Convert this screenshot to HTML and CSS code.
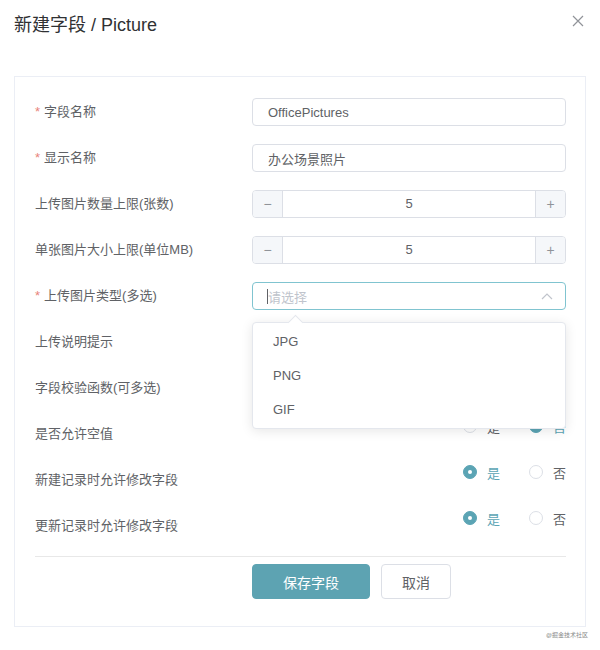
FILE: index.html
```html
<!DOCTYPE html>
<html lang="zh-CN">
<head>
  <meta charset="UTF-8">
  <title>新建字段 / Picture</title>
  <link rel="stylesheet" href="styles.css">
</head>
<body>

  <div class="dialog">
    <div class="dialog-header">
      <span class="dialog-title">新建字段 / Picture</span>
      <span class="close">
        <svg width="12" height="12" viewBox="0 0 12 12"><path d="M1 1L11 11M11 1L1 11" stroke="#909399" stroke-width="1.2" fill="none"/></svg>
      </span>
    </div>

    <div class="panel">
      <div class="form">
        <div class="form-row">
          <label class="form-label required">字段名称</label>
          <div class="form-control"><input class="text-input" value="OfficePictures"></div>
        </div>
        <div class="form-row">
          <label class="form-label required">显示名称</label>
          <div class="form-control"><input class="text-input" value="办公场景照片"></div>
        </div>
        <div class="form-row">
          <label class="form-label">上传图片数量上限(张数)</label>
          <div class="form-control">
            <div class="number-input">
              <span class="step minus">−</span>
              <span class="number-value">5</span>
              <span class="step plus">+</span>
            </div>
          </div>
        </div>
        <div class="form-row">
          <label class="form-label">单张图片大小上限(单位MB)</label>
          <div class="form-control">
            <div class="number-input">
              <span class="step minus">−</span>
              <span class="number-value">5</span>
              <span class="step plus">+</span>
            </div>
          </div>
        </div>
        <div class="form-row">
          <label class="form-label required">上传图片类型(多选)</label>
          <div class="form-control select-wrap">
            <div class="select is-focus">
              <span class="caret"></span><span class="placeholder">请选择</span>
              <svg class="arrow" width="12" height="7" viewBox="0 0 12 7"><path d="M1 6L6 1L11 6" stroke="#c0c4cc" stroke-width="1.2" fill="none"/></svg>
            </div>
            <div class="dropdown">
              <span class="dropdown-arrow"></span>
              <ul class="dropdown-list">
                <li>JPG</li>
                <li>PNG</li>
                <li>GIF</li>
              </ul>
            </div>
          </div>
        </div>
        <div class="form-row">
          <label class="form-label">上传说明提示</label>
          <div class="form-control"><input class="text-input" value=""></div>
        </div>
        <div class="form-row">
          <label class="form-label">字段校验函数(可多选)</label>
          <div class="form-control"><input class="text-input" value=""></div>
        </div>
        <div class="form-row">
          <label class="form-label">是否允许空值</label>
          <div class="form-control radio-group">
            <span class="radio"><span class="radio-dot"></span><span class="radio-text">是</span></span>
            <span class="radio checked"><span class="radio-dot"></span><span class="radio-text">否</span></span>
          </div>
        </div>
        <div class="form-row">
          <label class="form-label">新建记录时允许修改字段</label>
          <div class="form-control radio-group">
            <span class="radio checked"><span class="radio-dot"></span><span class="radio-text">是</span></span>
            <span class="radio"><span class="radio-dot"></span><span class="radio-text">否</span></span>
          </div>
        </div>
        <div class="form-row">
          <label class="form-label">更新记录时允许修改字段</label>
          <div class="form-control radio-group">
            <span class="radio checked"><span class="radio-dot"></span><span class="radio-text">是</span></span>
            <span class="radio"><span class="radio-dot"></span><span class="radio-text">否</span></span>
          </div>
        </div>
      </div>

      <div class="form-footer">
        <button class="btn btn-primary">保存字段</button>
        <button class="btn">取消</button>
      </div>
    </div>

    <div class="watermark">@掘金技术社区</div>
  </div>

</body>
</html>
```

FILE: styles.css
```css
body {
  margin: 0;
  background: #fff;
  font-family: "Liberation Sans", Arial, "Noto Sans CJK SC", sans-serif;
  color: #606266;
}
.dialog {
  width: 600px;
}
.dialog-header {
  display: flex;
  justify-content: space-between;
  align-items: flex-start;
  height: 76px;
  padding: 15px 16px 0 14px;
  box-sizing: border-box;
}
.dialog-title {
  font-size: 18px;
  line-height: 20px;
  color: #303133;
}
.close {
  display: block;
  width: 12px;
  height: 12px;
}
.close svg { display: block; }

.panel {
  margin: 0 14px;
  border: 1px solid #ebeef5;
  padding: 21px 19px 27px 20px;
}
.form-row {
  display: flex;
  align-items: center;
  height: 28px;
  margin-bottom: 18px;
}
.form-row:last-child { margin-bottom: 0; }
.form-label {
  width: 217px;
  flex: none;
  padding-bottom: 3px;
  font-size: 13px;
  color: #606266;
}
.form-label.required::before {
  content: "*";
  color: #e8837a;
  margin-right: 4px;
}
.form-control {
  flex: 1;
  height: 28px;
}
.text-input {
  display: block;
  width: 100%;
  height: 28px;
  box-sizing: border-box;
  border: 1px solid #dcdfe6;
  border-radius: 4px;
  padding: 0 15px;
  font: inherit;
  font-size: 13px;
  color: #606266;
  outline: none;
}

.number-input {
  display: flex;
  height: 28px;
  box-sizing: border-box;
  border: 1px solid #dcdfe6;
  border-radius: 4px;
  overflow: hidden;
}
.step {
  width: 29px;
  flex: none;
  background: #f5f7fa;
  color: #909399;
  font-size: 14px;
  display: flex;
  align-items: center;
  justify-content: center;
}
.minus { border-right: 1px solid #dcdfe6; }
.plus { border-left: 1px solid #dcdfe6; }
.number-value {
  flex: 1;
  text-align: center;
  line-height: 26px;
  font-size: 13px;
}

.select-wrap { position: relative; }
.select {
  display: flex;
  align-items: center;
  height: 28px;
  box-sizing: border-box;
  border: 1px solid #80c4d0;
  border-radius: 4px;
  padding: 0 12px 0 14px;
}
.caret {
  width: 1px;
  height: 15px;
  background: #606266;
}
.placeholder {
  flex: 1;
  font-size: 13px;
  color: #c0c4cc;
}
.arrow { display: block; }

.dropdown {
  position: absolute;
  top: 40px;
  left: 0;
  right: 0;
  z-index: 10;
  background: #fff;
  border: 1px solid #e4e7ed;
  border-radius: 4px;
  box-shadow: 0 2px 12px rgba(0, 0, 0, 0.1);
}
.dropdown-arrow {
  position: absolute;
  top: -6px;
  left: 37px;
  width: 10px;
  height: 10px;
  background: #fff;
  border-left: 1px solid #e4e7ed;
  border-top: 1px solid #e4e7ed;
  transform: rotate(45deg);
}
.dropdown-list {
  list-style: none;
  margin: 0;
  padding: 3px 0 0;
}
.dropdown-list li {
  height: 34px;
  line-height: 32px;
  padding: 0 20px;
  font-size: 13px;
  color: #606266;
}

.radio-group {
  display: flex;
  justify-content: flex-end;
  align-items: flex-start;
  gap: 29px;
  margin-top: -2px;
}
.radio {
  display: inline-flex;
  align-items: center;
  gap: 10px;
  height: 14px;
  font-size: 13px;
  color: #606266;
}
.radio-dot {
  width: 14px;
  height: 14px;
  box-sizing: border-box;
  border: 1px solid #dcdfe6;
  border-radius: 50%;
  background: #fff;
  position: relative;
}
.radio.checked .radio-dot {
  background: #5ba4b4;
  border-color: #5ba4b4;
}
.radio.checked .radio-dot::after {
  content: "";
  position: absolute;
  left: 4px;
  top: 4px;
  width: 4px;
  height: 4px;
  border-radius: 50%;
  background: #fff;
}
.radio.checked .radio-text { color: #5ba4b4; }

.form-footer {
  margin-top: 16px;
  border-top: 1px solid #e8e8e8;
  padding: 7px 0 0 217px;
  display: flex;
  gap: 11px;
}
.btn {
  height: 35px;
  padding: 0 20px;
  border: 1px solid #dcdfe6;
  border-radius: 4px;
  background: #fff;
  color: #606266;
  font: inherit;
  font-size: 14px;
}
.btn-primary {
  width: 118px;
  background: #5da3b2;
  border-color: #5da3b2;
  color: #fff;
}
.watermark {
  text-align: right;
  padding: 3px 12px 0 0;
  font-size: 6px;
  color: #888;
}
```
